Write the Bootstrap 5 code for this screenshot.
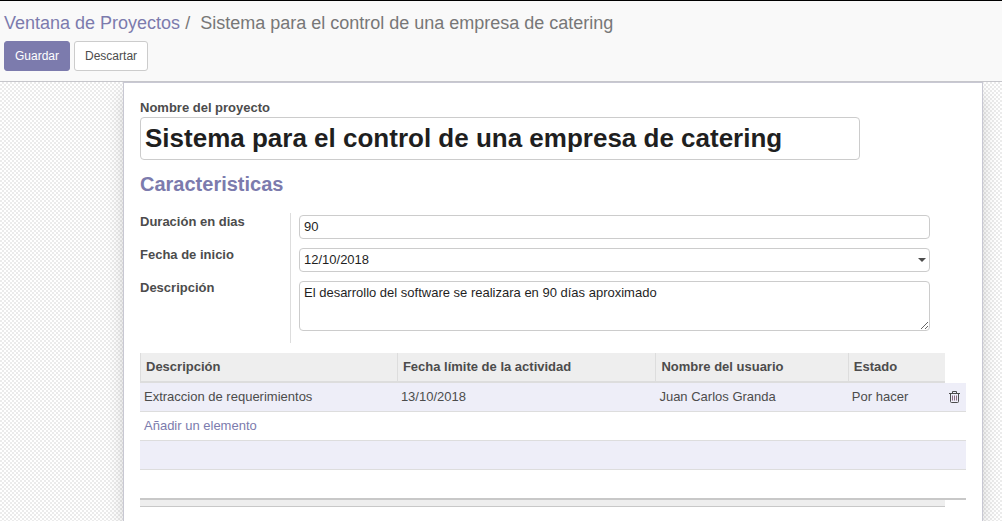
<!DOCTYPE html>
<html lang="es">
<head>
<meta charset="utf-8">
<meta name="viewport" content="width=device-width, initial-scale=1">
<title>Ventana de Proyectos</title>
<link href="https://cdn.jsdelivr.net/npm/bootstrap@5.3.0/dist/css/bootstrap.min.css" rel="stylesheet">
<style>
  :root { --brand: #7c7bad; --ink: #4c4c4c; --line: #c8c8d3; }
  body { font-family: "Liberation Sans", Arial, sans-serif; font-size: 13px; line-height: 20px; color: var(--ink); background: #fff; }
  a { color: var(--brand); text-decoration: none; }
  .control-panel { background: #f9f9f9; border-top: 1px solid #000; border-bottom: 1px solid #c6c6cb; padding: 8px 4px 10px; }
  .trail { --bs-breadcrumb-divider: "/"; --bs-breadcrumb-font-size: 18px; --bs-breadcrumb-item-padding-x: 5px; --bs-breadcrumb-margin-bottom: 4px; line-height: 28px; }
  .trail .breadcrumb-item + .breadcrumb-item::before { color: #777; padding-right: 10px; }
  .trail .active { color: #777; }
  .panel-btn { --bs-btn-font-size: 12px; --bs-btn-padding-x: 10px; --bs-btn-padding-y: 5px; --bs-btn-line-height: 18px; --bs-btn-border-radius: 3px; }
  .save { --bs-btn-color: #fff; --bs-btn-bg: #7c7bad; --bs-btn-border-color: #7c7bad; --bs-btn-hover-color: #fff; --bs-btn-hover-bg: #5f5e97; }
  .discard { --bs-btn-color: var(--ink); --bs-btn-bg: #fff; --bs-btn-border-color: #ccc; --bs-btn-hover-bg: #eee; }
  .form-view {
    padding: 0 19px 0 123px;
    background: repeating-conic-gradient(#ebebeb 0 25%, #fff 0 50%) 0 0 / 4px 4px;
    overflow: hidden; min-height: calc(100vh - 82px);
  }
  .sheet { background: #fff; border: 1px solid var(--line); border-bottom: 0; padding: 15px 16px 24px; box-shadow: 0 5px 20px -8px rgba(0, 0, 0, .4); min-height: calc(100vh - 82px); }
  .sheet label { font-weight: bold; }
  .name-label { line-height: 19px; }
  .field { color: #1f1f1f; border: 1px solid #ccc; border-radius: 4px; font-size: 13px; line-height: 18px; padding: 2px 4px; background-color: #fff; }
  .title-field { max-width: 720px; font-size: 26px; font-weight: bold; line-height: 37px; }
  .section-title { color: var(--brand); font-size: 20px; font-weight: bold; line-height: 24px; margin: 12px 0 17px; }
  .fields { max-width: 790px; display: grid; grid-template-columns: 150px 1fr; margin-bottom: 10px; }
  .fields label { line-height: 18px; }
  .cell { border-left: 1px solid #ddd; padding: 2px 0 7px 8px; }
  .cell-last { padding-bottom: 12px; }
  .date-field { background-image: url("data:image/svg+xml,%3Csvg xmlns='http://www.w3.org/2000/svg' viewBox='0 0 8 4'%3E%3Cpath d='M0 0h8L4 4z' fill='%234c4c4c'/%3E%3C/svg%3E"); background-size: 8px 4px; background-position: right 3px center; }
  .area-field { height: 50px; min-height: 50px; resize: vertical; }
  .tasks { --bs-table-color: var(--ink); --bs-table-bg: transparent; table-layout: fixed; margin: 0; border-collapse: separate; border-spacing: 0; }
  .tasks > :not(caption) > tr > * { padding: 4px; line-height: 20px; border: 0 solid #ddd; box-shadow: none; color: var(--ink); }
  .tasks > thead > tr > th { background: #eee; border-width: 0 0 2px 1px; padding-left: 5px; }
  .tasks > thead > tr > th.blank, .tasks > tfoot > tr > td.blank { background: none; border-width: 0; }
  .tasks > tbody > tr > td { border-bottom-width: 1px; height: 29px; }
  .tasks > tbody > tr:nth-child(odd) > td { background: #eeeef8; }
  .tasks > tbody > tr:last-child > td { border-bottom: 2px solid #c8c8c8; height: 30px; }
  .tasks > tfoot > tr > td { height: 7px; padding: 0; background: #eee; border-bottom: 1px solid #c8c8c8; }
  .tasks a { color: var(--brand); }
  .trash { border: 0; background: none; padding: 0; color: var(--ink); display: block; margin: 0 auto 0 4px; }
  .trash svg { display: block; }
</style>
</head>
<body>
<header class="control-panel">
  <nav aria-label="Ruta">
    <ol class="breadcrumb trail">
      <li class="breadcrumb-item"><a href="#">Ventana de Proyectos</a></li>
      <li class="breadcrumb-item active" aria-current="page">Sistema para el control de una empresa de catering</li>
    </ol>
  </nav>
  <div class="d-flex gap-1">
    <button type="submit" form="project" class="btn panel-btn save">Guardar</button>
    <button type="button" class="btn panel-btn discard">Descartar</button>
  </div>
</header>
<main class="form-view">
  <form class="sheet" id="project">
    <label for="name" class="d-block name-label">Nombre del proyecto</label>
    <input id="name" class="field title-field d-block w-100" type="text" value="Sistema para el control de una empresa de catering">
    <h2 class="section-title">Caracteristicas</h2>
    <div class="fields">
      <label for="days">Duración en dias</label>
      <div class="cell"><input id="days" class="field d-block w-100" type="text" value="90"></div>
      <label for="start">Fecha de inicio</label>
      <div class="cell"><select id="start" class="form-select field date-field"><option>12/10/2018</option></select></div>
      <label for="about">Descripción</label>
      <div class="cell cell-last"><textarea id="about" class="field area-field d-block w-100">El desarrollo del software se realizara en 90 días aproximado</textarea></div>
    </div>
    <table class="table tasks">
      <colgroup><col style="width:31.1%"><col style="width:31.3%"><col style="width:23.3%"><col><col style="width:21px"></colgroup>
      <thead>
        <tr><th>Descripción</th><th>Fecha límite de la actividad</th><th>Nombre del usuario</th><th>Estado</th><th class="blank"></th></tr>
      </thead>
      <tbody>
        <tr>
          <td>Extraccion de requerimientos</td><td>13/10/2018</td><td>Juan Carlos Granda</td><td>Por hacer</td>
          <td class="p-0 align-middle"><button type="button" class="trash" aria-label="Eliminar"><svg width="11" height="12" viewBox="0 0 11 12" fill="none" stroke="currentColor"><path d="M0 2.5h11M3.5 2V.5h4V2"/><path d="M1.5 3v7.5q0 1 1 1h6q1 0 1-1V3"/><path stroke="#8c6c80" d="M3.5 4.5v5M5.5 4.5v5M7.5 4.5v5"/></svg></button></td>
        </tr>
        <tr><td colspan="5"><a href="#">Añadir un elemento</a></td></tr>
        <tr><td colspan="5"></td></tr>
        <tr><td colspan="5"></td></tr>
      </tbody>
      <tfoot><tr><td colspan="4"></td><td class="blank"></td></tr></tfoot>
    </table>
  </form>
</main>
<script src="https://cdn.jsdelivr.net/npm/bootstrap@5.3.0/dist/js/bootstrap.bundle.min.js"></script>
</body>
</html>
